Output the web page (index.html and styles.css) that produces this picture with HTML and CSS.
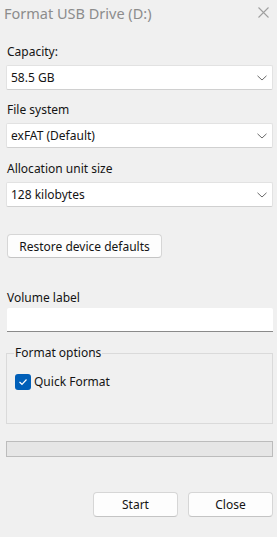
FILE: index.html
```html
<!DOCTYPE html>
<html>
<head>
<meta charset="utf-8">
<link rel="stylesheet" href="styles.css">
</head>
<body>
<div class="window">
  <div class="titlebar">
    <span class="title">Format USB Drive (D:)</span>
    <svg class="close" width="11" height="11" viewBox="0 0 11 11"><path d="M0.5 0.5 L10.5 10.5 M10.5 0.5 L0.5 10.5" stroke="#a0a0a0" stroke-width="1.1" fill="none"/></svg>
  </div>
  <div class="content">
    <div class="label first">Capacity:</div>
    <div class="select"><span>58.5 GB</span><svg width="10" height="6" viewBox="0 0 10 6"><path d="M0.5 0.8 L5 5 L9.5 0.8" stroke="#6a6a6a" stroke-width="1" fill="none"/></svg></div>
    <div class="label second">File system</div>
    <div class="select"><span>exFAT (Default)</span><svg width="10" height="6" viewBox="0 0 10 6"><path d="M0.5 0.8 L5 5 L9.5 0.8" stroke="#6a6a6a" stroke-width="1" fill="none"/></svg></div>
    <div class="label">Allocation unit size</div>
    <div class="select"><span>128 kilobytes</span><svg width="10" height="6" viewBox="0 0 10 6"><path d="M0.5 0.8 L5 5 L9.5 0.8" stroke="#6a6a6a" stroke-width="1" fill="none"/></svg></div>
    <div class="restore-row"><button class="btn restore">Restore device defaults</button></div>
    <div class="label vol">Volume label</div>
    <div class="input"></div>
    <fieldset class="group">
      <legend>Format options</legend>
      <label class="check"><span class="box"><svg width="10" height="8" viewBox="0 0 10 8"><path d="M1.5 4 L4 6.3 L8.5 1.5" stroke="#fff" stroke-width="1.2" fill="none"/></svg></span>Quick Format</label>
    </fieldset>
    <div class="progress"></div>
    <div class="actions">
      <button class="btn action">Start</button>
      <button class="btn action">Close</button>
    </div>
  </div>
</div>
</body>
</html>
```
FILE: styles.css
```css
html, body {
  margin: 0;
  padding: 0;
  background: #f0f0f0;
}
body {
  font-family: "Noto Sans", "Open Sans", sans-serif;
  color: #141414;
  width: 277px;
  height: 537px;
  overflow: hidden;
}
.titlebar {
  height: 28px;
  display: flex;
  align-items: center;
  justify-content: space-between;
  padding: 0 8px 0 4px;
}
.title {
  font-size: 14.5px;
  color: #8c8c8c;
  margin-top: -2px;
}
.close {
  margin-top: -4px;
}
.content {
  padding: 0 4px 0 6px;
}
.label {
  font-size: 12px;
  line-height: 17px;
  height: 17px;
  margin: 12px 0 5px 1px;
}
.label.first {
  margin-top: 15px;
}
.label.second {
  margin-top: 11px;
}
.select {
  height: 23px;
  background: #fff;
  border: 1px solid #e2e2e2;
  border-bottom-color: #d0d0d0;
  border-radius: 2px;
  display: flex;
  align-items: center;
  justify-content: space-between;
  padding: 0 5px 0 4px;
  font-size: 12px;
}
.select svg {
  margin-top: 1px;
}
.restore-row {
  display: flex;
  margin-top: 27px;
}
.btn {
  font-family: inherit;
  font-size: 12px;
  color: #141414;
  background: #fdfdfd;
  border: 1px solid #d6d6d6;
  border-bottom-color: #c4c4c4;
  border-radius: 4px;
  padding: 0;
  display: flex;
  align-items: center;
  justify-content: center;
}
.restore {
  margin-left: 1px;
  width: 155px;
  height: 24px;
}
.label.vol {
  margin-top: 31px;
  margin-bottom: 2px;
}
.input {
  margin-left: 1px;
  height: 23px;
  background: #fff;
  border-bottom: 1px solid #8a8a8a;
  border-radius: 2px 2px 0 0;
}
.group {
  margin: 14px 0 0 0;
  padding: 0 8px;
  height: 78px;
  box-sizing: border-box;
  border: 1px solid #dadada;
  border-radius: 0;
  min-width: 0;
}
.group legend {
  font-size: 12px;
  padding: 0 1px;
  margin-left: -1px;
  line-height: 14px;
}
.check {
  display: flex;
  align-items: center;
  font-size: 12px;
  margin-top: 13px;
  gap: 3px;
}
.box {
  width: 16px;
  height: 16px;
  border-radius: 3px;
  background: #005fb8;
  display: flex;
  align-items: center;
  justify-content: center;
}
.progress {
  margin-top: 17px;
  height: 14px;
  background: #e6e6e6;
  border: 1px solid #bcbcbc;
}
.actions {
  margin-top: 35px;
  display: flex;
  justify-content: flex-end;
  gap: 10px;
}
.action {
  width: 85px;
  height: 25px;
}
```
